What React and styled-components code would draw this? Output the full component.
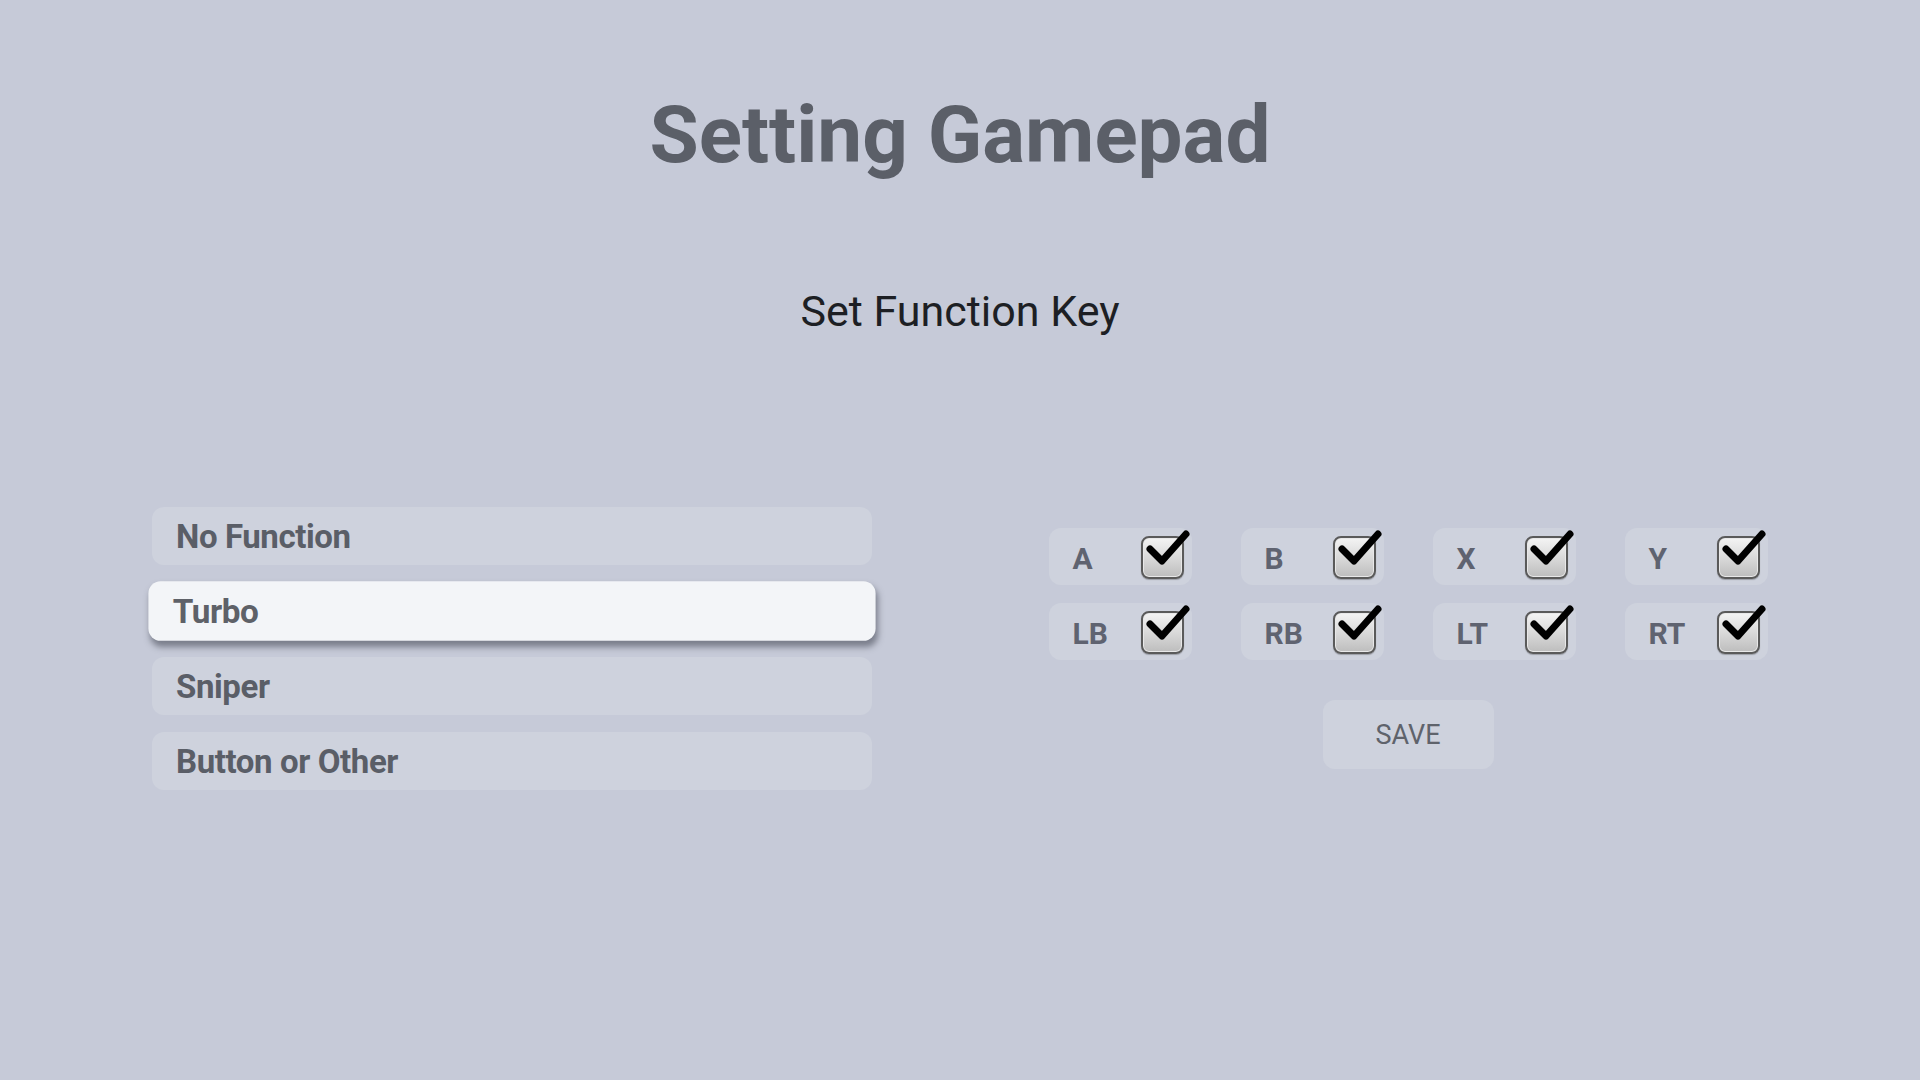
import styled, { createGlobalStyle } from 'styled-components'

const GlobalStyle = createGlobalStyle`
  html, body {
    margin: 0;
    padding: 0;
    background: #c6cad8;
    font-family: Roboto, "Noto Sans", sans-serif;
  }
`

const Page = styled.div`
  width: 1920px;
  height: 1080px;
  box-sizing: border-box;
  padding: 87px 152px 0;
  display: flex;
  flex-direction: column;
  align-items: center;
  overflow: hidden;
`

const Title = styled.h1`
  margin: 0;
  font-size: 80px;
  line-height: 96px;
  font-weight: 700;
  color: #5b5f68;
`

const Subtitle = styled.h2`
  margin: 103px 0 0;
  font-size: 43px;
  line-height: 50px;
  font-weight: 400;
  color: #1d1f24;
`

const Columns = styled.div`
  margin-top: 171px;
  width: 100%;
  display: grid;
  grid-template-columns: 1fr 1fr;
  column-gap: 176px;
  align-items: center;
`

const FunctionList = styled.div`
  display: flex;
  flex-direction: column;
  gap: 17px;
`

const FunctionItem = styled.div`
  height: 58px;
  border-radius: 12px;
  box-sizing: border-box;
  padding-left: 24px;
  display: flex;
  align-items: center;
  font-size: 33px;
  font-weight: 700;
  letter-spacing: -0.4px;
  color: ${p => (p.$active ? '#5e6168' : '#5a5e67')};
  background: ${p => (p.$active ? '#f3f5f8' : '#ced2dd')};
  box-shadow: ${p => (p.$active ? '2px 5px 6px rgba(60, 64, 76, 0.55)' : 'none')};
  transform: ${p => (p.$active ? 'scale(1.01, 1.03)' : 'none')};
`

const KeyPanel = styled.div`
  display: flex;
  flex-direction: column;
  align-items: center;
  gap: 40px;
`

const KeyGrid = styled.div`
  display: grid;
  grid-template-columns: repeat(4, 143px);
  column-gap: 49px;
  row-gap: 18px;
`

const KeyCell = styled.label`
  height: 57px;
  border-radius: 12px;
  background: #ced2dd;
  box-sizing: border-box;
  padding: 0 8px 0 24px;
  display: flex;
  align-items: center;
  justify-content: space-between;
`

const KeyName = styled.span`
  font-size: 30px;
  font-weight: 700;
  color: #5f6370;
  padding-top: 4px;
`

const Box = styled.span`
  position: relative;
  width: 43px;
  height: 43px;
  margin-top: 2px;
  box-sizing: border-box;
  border-radius: 8px;
  border: 2px solid #5a5a5a;
  background: linear-gradient(#f4f4f4, #d4d4d4 60%, #bdbdbd);
  box-shadow: inset 0 0 0 1px #e8e8e8, 0 1px 1px rgba(0, 0, 0, 0.25);
`

const Tick = styled.svg`
  position: absolute;
  left: 3px;
  top: -6px;
  width: 44px;
  height: 40px;
  overflow: visible;
`

const SaveButton = styled.button`
  width: 171px;
  height: 69px;
  border: none;
  border-radius: 12px;
  background: #ced2dd;
  font-family: Roboto, "Noto Sans", sans-serif;
  font-size: 27px;
  font-weight: 400;
  color: #5f636b;
  cursor: pointer;
`

const functions = ['No Function', 'Turbo', 'Sniper', 'Button or Other']
const keys = ['A', 'B', 'X', 'Y', 'LB', 'RB', 'LT', 'RT']

function CheckBox() {
  return (
    <Box>
      <Tick viewBox="0 0 44 40">
        <path
          d="M4 17 L16 29 L40 2"
          fill="none"
          stroke="#000"
          strokeWidth="7"
          strokeLinecap="round"
          strokeLinejoin="round"
        />
      </Tick>
    </Box>
  )
}

export default function App() {
  return (
    <>
      <GlobalStyle />
      <Page>
        <Title>Setting Gamepad</Title>
        <Subtitle>Set Function Key</Subtitle>
        <Columns>
          <FunctionList>
            {functions.map(f => (
              <FunctionItem key={f} $active={f === 'Turbo'}>
                {f}
              </FunctionItem>
            ))}
          </FunctionList>
          <KeyPanel>
            <KeyGrid>
              {keys.map(k => (
                <KeyCell key={k}>
                  <KeyName>{k}</KeyName>
                  <CheckBox />
                </KeyCell>
              ))}
            </KeyGrid>
            <SaveButton>SAVE</SaveButton>
          </KeyPanel>
        </Columns>
      </Page>
    </>
  )
}
